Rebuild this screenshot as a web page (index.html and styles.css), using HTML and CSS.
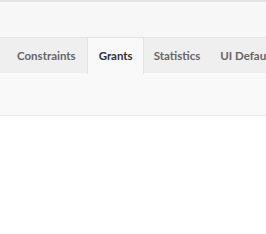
FILE: index.html
```html
<!DOCTYPE html>
<html>
<head>
  <link rel="stylesheet" href="styles.css">
</head>
<body>
  <div class="topbar"></div>
  <div class="header"></div>
  <div class="tabs">
    <div class="tab first">Constraints</div>
    <div class="tab active">Grants</div>
    <div class="tab">Statistics</div>
    <div class="tab">UI Defaults</div>
  </div>
  <div class="toolbar"></div>
  <div class="content"></div>
</body>
</html>
```

FILE: styles.css
```css
body {
  margin: 0;
  background: #fff;
  font-family: Lato, "Open Sans", sans-serif;
  overflow: hidden;
}

.topbar {
  height: 2px;
  background: #e2e2e2;
}

.header {
  height: 35px;
  background: #f7f7f7;
  border-bottom: 1px solid #e3e3e3;
}

.tabs {
  display: flex;
  height: 35px;
  background: #efefef;
  white-space: nowrap;
}

.tab {
  padding: 0 10px;
  line-height: 35px;
  font-size: 11.5px;
  font-weight: 700;
  color: #666;
}

.tab.first {
  padding-left: 17px;
  padding-right: 11px;
}

.tab.active {
  padding: 0 10px 0 11px;
  background: #f9f9f9;
  color: #333;
  border-left: 1px solid #e3e3e3;
  border-right: 1px solid #e3e3e3;
  height: 36px;
}

.toolbar {
  height: 42px;
  background: #f9f9f9;
  border-bottom: 1px solid #ececec;
}

.content {
  height: 120px;
  background: #fff;
}
```
